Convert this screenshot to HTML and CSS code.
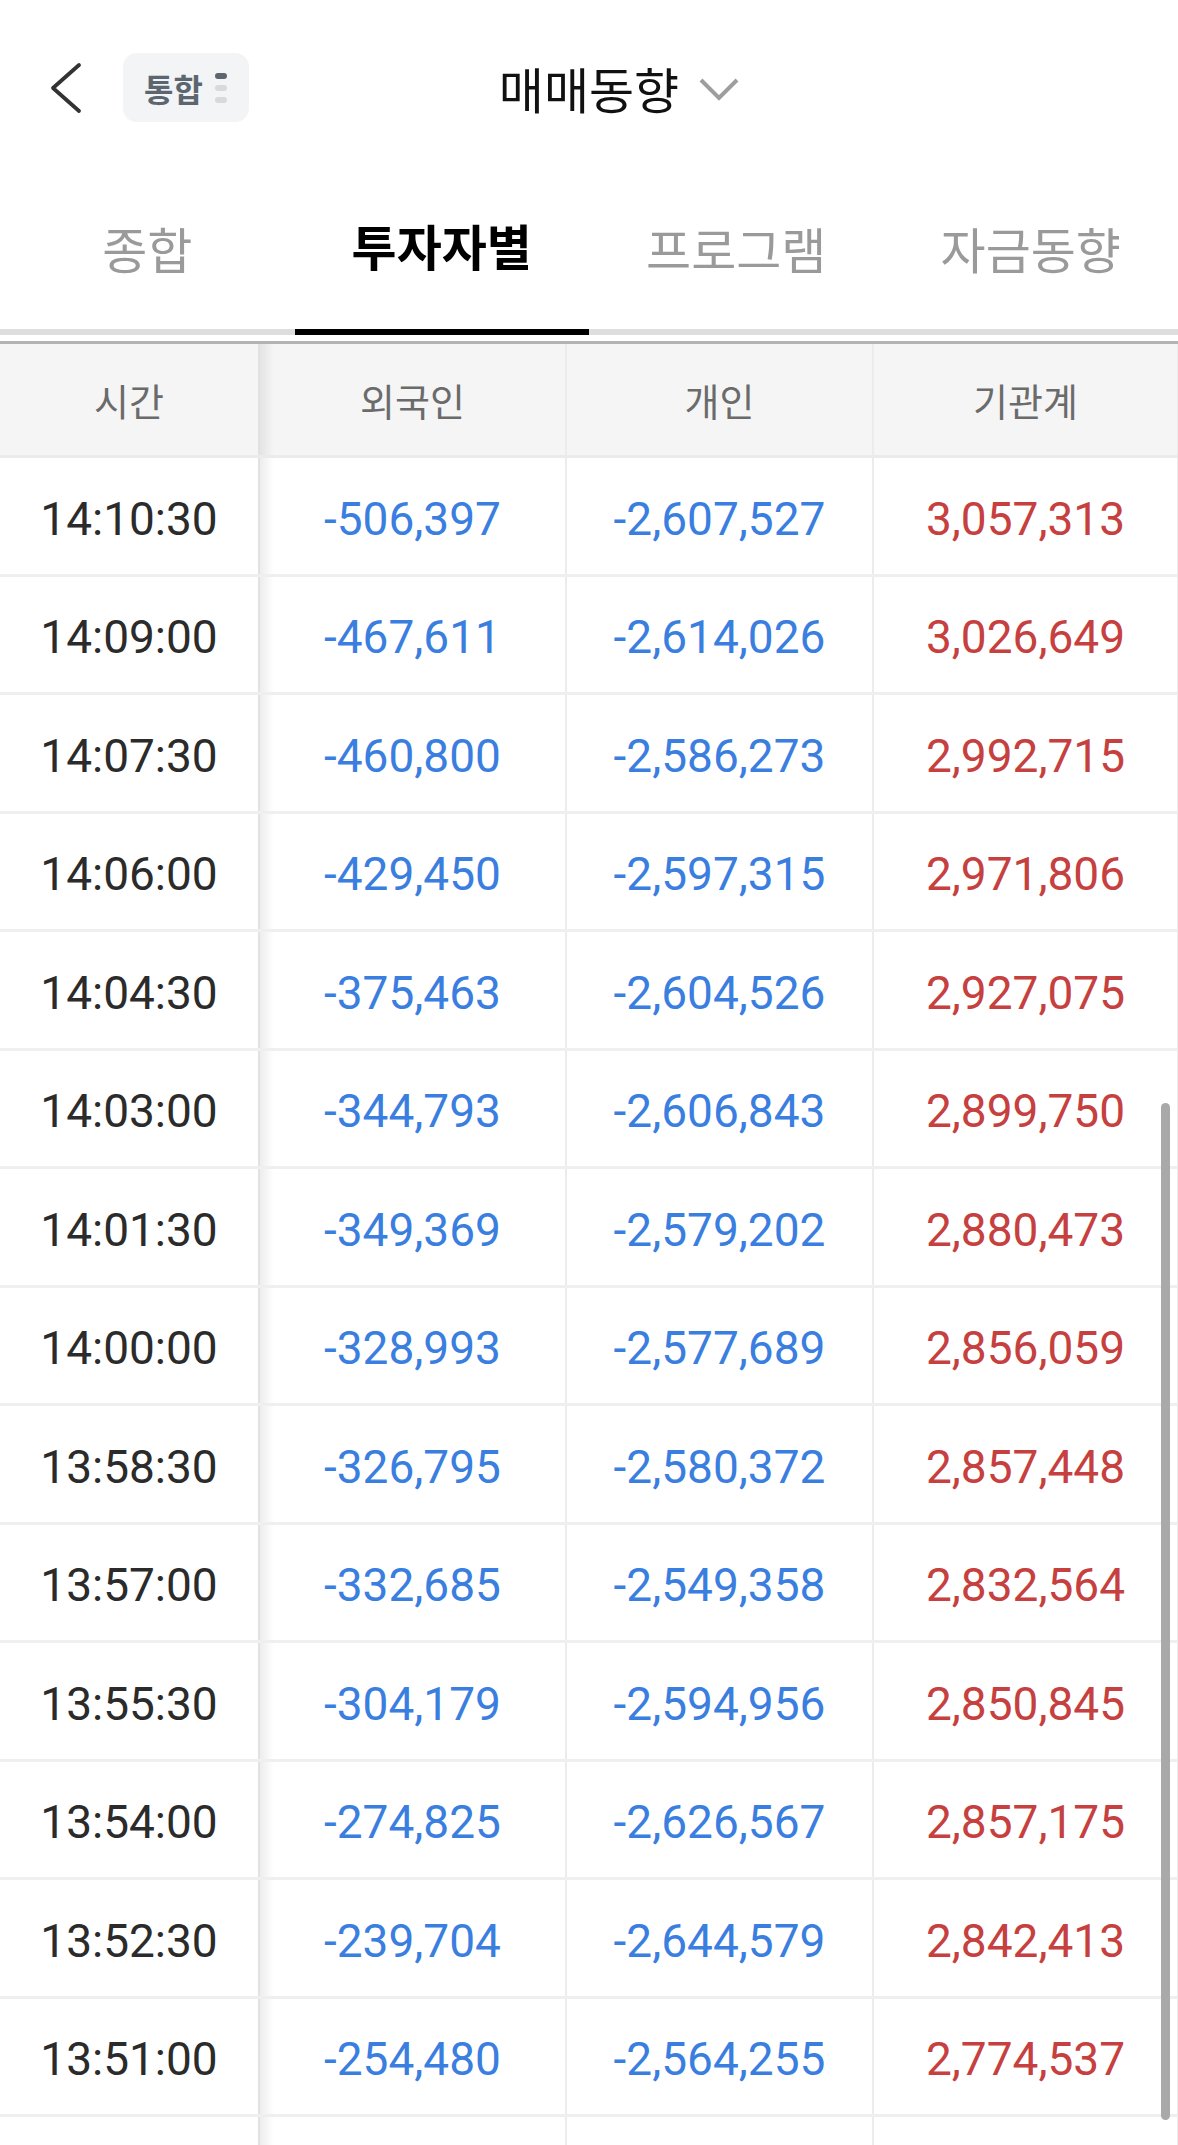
FILE: index.html
```html
<!DOCTYPE html>
<html lang="ko">
<head>
	<meta charset="utf-8">
	<title>매매동향</title>
	<link rel="stylesheet" href="styles.css">
</head>
<body>
	<header class="topbar">
		<div class="topbar-left">
			<button class="back" type="button">
				<svg width="32" height="52" viewBox="0 0 32 52"><polyline points="29,3 3,26 29,49" fill="none" stroke="#333" stroke-width="3.8" stroke-linecap="round" stroke-linejoin="round"/></svg>
			</button>
			<div class="chip">
				<span>통합</span>
				<span class="dots"><i class="on"></i><i></i><i></i></span>
			</div>
		</div>
		<h1 class="title">매매동향</h1>
		<div class="topbar-right">
			<svg width="44" height="28" viewBox="0 0 44 28"><polyline points="4,4 22,22 40,4" fill="none" stroke="#9e9e9e" stroke-width="4"/></svg>
		</div>
	</header>

	<nav class="tabs">
		<div class="tab">종합</div>
		<div class="tab active">투자자별</div>
		<div class="tab">프로그램</div>
		<div class="tab">자금동향</div>
	</nav>

	<div class="table">
		<div class="row head">
			<div class="c">시간</div>
			<div class="c">외국인</div>
			<div class="c">개인</div>
			<div class="c">기관계</div>
			<div class="c"></div>
		</div>
		<div class="row"><div class="c time">14:10:30</div><div class="c down">-506,397</div><div class="c down">-2,607,527</div><div class="c up">3,057,313</div><div class="c"></div></div>
		<div class="row"><div class="c time">14:09:00</div><div class="c down">-467,611</div><div class="c down">-2,614,026</div><div class="c up">3,026,649</div><div class="c"></div></div>
		<div class="row"><div class="c time">14:07:30</div><div class="c down">-460,800</div><div class="c down">-2,586,273</div><div class="c up">2,992,715</div><div class="c"></div></div>
		<div class="row"><div class="c time">14:06:00</div><div class="c down">-429,450</div><div class="c down">-2,597,315</div><div class="c up">2,971,806</div><div class="c"></div></div>
		<div class="row"><div class="c time">14:04:30</div><div class="c down">-375,463</div><div class="c down">-2,604,526</div><div class="c up">2,927,075</div><div class="c"></div></div>
		<div class="row"><div class="c time">14:03:00</div><div class="c down">-344,793</div><div class="c down">-2,606,843</div><div class="c up">2,899,750</div><div class="c"></div></div>
		<div class="row"><div class="c time">14:01:30</div><div class="c down">-349,369</div><div class="c down">-2,579,202</div><div class="c up">2,880,473</div><div class="c"></div></div>
		<div class="row"><div class="c time">14:00:00</div><div class="c down">-328,993</div><div class="c down">-2,577,689</div><div class="c up">2,856,059</div><div class="c"></div></div>
		<div class="row"><div class="c time">13:58:30</div><div class="c down">-326,795</div><div class="c down">-2,580,372</div><div class="c up">2,857,448</div><div class="c"></div></div>
		<div class="row"><div class="c time">13:57:00</div><div class="c down">-332,685</div><div class="c down">-2,549,358</div><div class="c up">2,832,564</div><div class="c"></div></div>
		<div class="row"><div class="c time">13:55:30</div><div class="c down">-304,179</div><div class="c down">-2,594,956</div><div class="c up">2,850,845</div><div class="c"></div></div>
		<div class="row"><div class="c time">13:54:00</div><div class="c down">-274,825</div><div class="c down">-2,626,567</div><div class="c up">2,857,175</div><div class="c"></div></div>
		<div class="row"><div class="c time">13:52:30</div><div class="c down">-239,704</div><div class="c down">-2,644,579</div><div class="c up">2,842,413</div><div class="c"></div></div>
		<div class="row"><div class="c time">13:51:00</div><div class="c down">-254,480</div><div class="c down">-2,564,255</div><div class="c up">2,774,537</div><div class="c"></div></div>
		<div class="row"><div class="c"></div><div class="c"></div><div class="c"></div><div class="c"></div><div class="c"></div></div>
		<div class="scrollbar"></div>
	</div>
</body>
</html>
```

FILE: styles.css
```css
body {
	margin: 0;
	width: 1178px;
	overflow: hidden;
	background: #fff;
	font-family: "Noto Sans CJK KR", "Noto Sans", sans-serif;
	color: #111;
}

/* top bar */
.topbar {
	height: 175px;
	display: grid;
	grid-template-columns: 1fr auto 1fr;
	align-items: center;
}
.topbar-left {
	display: flex;
	align-items: center;
	padding-left: 50px;
}
.back {
	border: none;
	background: none;
	padding: 0;
	width: 32px;
	height: 52px;
	display: flex;
}
.chip {
	margin-left: 41px;
	height: 69px;
	padding: 0 22px 0 21px;
	background: #f3f4f5;
	border-radius: 14px;
	display: flex;
	align-items: center;
	gap: 12px;
	font-size: 32px;
	font-weight: 700;
	color: #5c6670;
}
.dots {
	display: flex;
	flex-direction: column;
	gap: 6px;
}
.dots i {
	display: block;
	width: 12px;
	height: 6px;
	border-radius: 3px;
	background: #d6dadd;
}
.dots i.on {
	background: #5c6670;
}
.title {
	margin: 0;
	font-size: 49px;
	font-weight: 400;
	line-height: 1;
}
.topbar-right {
	display: flex;
	align-items: center;
	padding-left: 18px;
	padding-top: 4px;
}

/* tabs */
.tabs {
	display: flex;
	border-bottom: 6px solid #dedede;
}
.tab {
	flex: 1;
	height: 154px;
	padding-bottom: 10px;
	box-sizing: border-box;
	display: flex;
	align-items: center;
	justify-content: center;
	font-size: 49px;
	color: #9a9a9a;
}
.tab.active {
	color: #000;
	font-weight: 700;
	border-bottom: 6px solid #000;
	margin-bottom: -6px;
	height: 160px;
	padding-bottom: 16px;
}

/* table */
.table {
	position: relative;
	margin-top: 6px;
	border-top: 3px solid #b3b3b3;
	overflow: hidden;
}
.row {
	display: grid;
	grid-template-columns: 258px 307px 307px 305px 100px;
	height: 118.5px;
	box-sizing: border-box;
	border-bottom: 3px solid #efefef;
	font-family: Roboto, "Noto Sans", sans-serif;
	font-size: 46px;
}
.row.head {
	height: 114px;
	background: #f5f5f5;
	font-family: "Noto Sans CJK KR", sans-serif;
	font-size: 38px;
	color: #6b6b6b;
	border-bottom-color: #ebebeb;
}
.c {
	display: flex;
	align-items: center;
	justify-content: center;
	white-space: nowrap;
	padding-top: 6px;
}
.head .c {
	padding-top: 0;
}
.c + .c {
	border-left: 2px solid #ececec;
}
.c:nth-child(2) {
	border-left-color: #e2e2e2;
	background: linear-gradient(to right, rgba(0, 0, 0, 0.07), rgba(0, 0, 0, 0) 14px);
}
.time {
	color: #2b2b2b;
}
.down {
	color: #3a7ee0;
}
.up {
	color: #c64040;
}
.scrollbar {
	position: absolute;
	top: 759px;
	right: 8px;
	width: 9px;
	height: 1017px;
	border-radius: 5px;
	background: #a9a9a9;
}
```
